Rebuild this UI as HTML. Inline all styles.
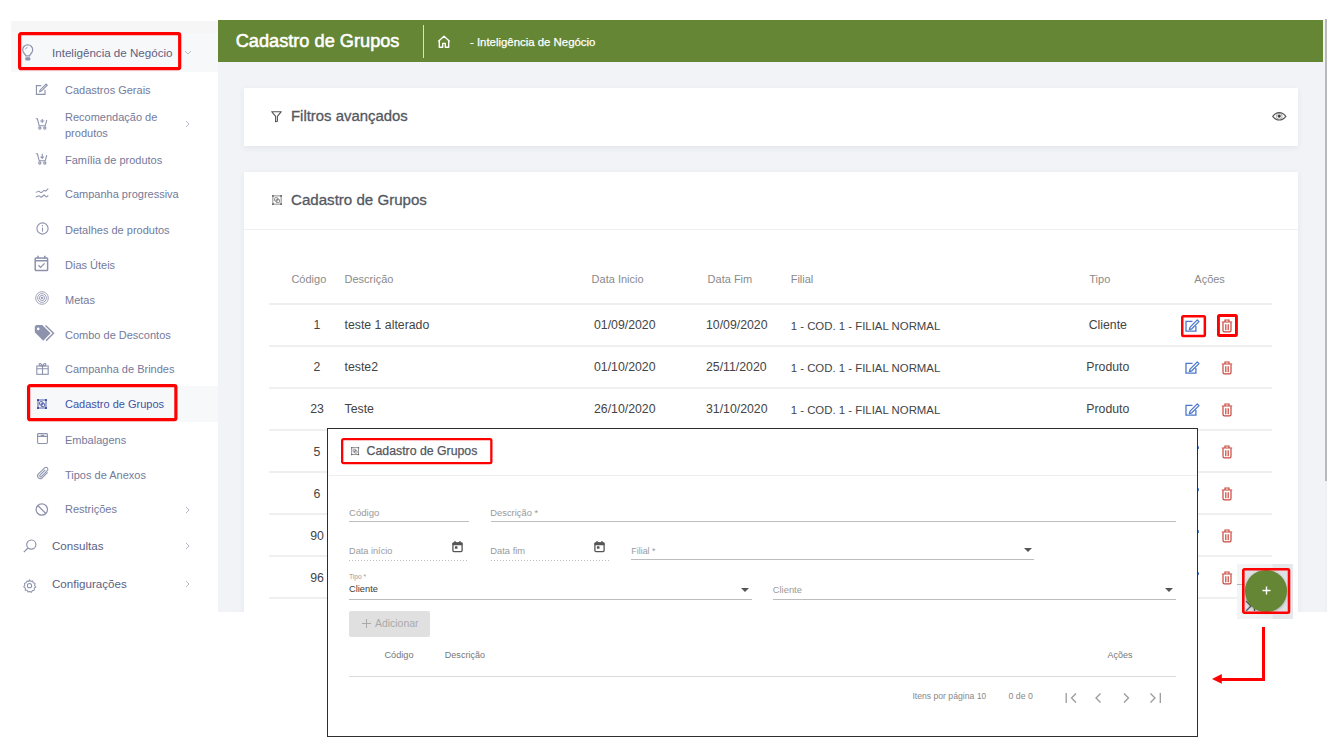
<!DOCTYPE html>
<html><head><meta charset="utf-8"><style>
html,body{margin:0;padding:0;background:#fff;}
body{width:1337px;height:753px;overflow:hidden;position:relative;font-family:"Liberation Sans", sans-serif;}
.t{position:absolute;white-space:nowrap;}
.r{position:absolute;}
svg{position:absolute;overflow:visible;}
</style></head><body>
<div class="r" style="left:11px;top:21px;width:207px;height:11.5px;background:#f6f6f7;"></div>
<div class="r" style="left:11px;top:32.5px;width:207px;height:39px;background:#f7f8fa;"></div>
<div class="r" style="left:25px;top:385.5px;width:193px;height:36.3px;background:#f7f8fa;"></div>
<div class="r" style="left:218px;top:20px;width:1107px;height:592.7px;background:#f1f3f7;"></div>
<div class="r" style="left:218px;top:20px;width:1105px;height:42px;background:#658634;"></div>
<div class="r" style="left:423px;top:25px;width:1px;height:33px;background:rgba(255,255,255,0.75);"></div>
<div class="r" style="left:1325px;top:19px;width:2px;height:462px;background:#b9b9b9;"></div>
<div class="r" style="left:1325px;top:481px;width:2px;height:131px;background:#f0f0f0;"></div>
<div class="r" style="left:244px;top:88px;width:1054px;height:58px;background:#fff;box-shadow:0 2px 6px rgba(40,50,80,0.07);"></div>
<div class="r" style="left:244px;top:172px;width:1054px;height:440px;background:#fff;box-shadow:0 2px 6px rgba(40,50,80,0.07);"></div>
<div class="r" style="left:244px;top:229px;width:1054px;height:1px;background:#eef0f3;"></div>
<div class="r" style="left:269px;top:303px;width:1003px;height:2px;background:#efefef;"></div>
<div class="r" style="left:269px;top:345px;width:1003px;height:2px;background:#efefef;"></div>
<div class="r" style="left:269px;top:387px;width:1003px;height:2px;background:#efefef;"></div>
<div class="r" style="left:269px;top:429px;width:1003px;height:2px;background:#efefef;"></div>
<div class="r" style="left:269px;top:471px;width:1003px;height:2px;background:#efefef;"></div>
<div class="r" style="left:269px;top:513px;width:1003px;height:2px;background:#efefef;"></div>
<div class="r" style="left:269px;top:555px;width:1003px;height:2px;background:#efefef;"></div>
<div class="r" style="left:269px;top:597px;width:1003px;height:2px;background:#efefef;"></div>
<div class="t" style="left:52px;top:45.53px;font-size:11.6px;line-height:14.5px;color:#5c6183;font-weight:normal;">Inteligência de Negócio</div>
<div class="t" style="left:65px;top:83.71px;font-size:11px;line-height:13.75px;color:#737a9b;font-weight:normal;">Cadastros Gerais</div>
<div class="t" style="left:65px;top:110.81px;font-size:11px;line-height:13.75px;color:#737a9b;font-weight:normal;">Recomendação de</div>
<div class="t" style="left:65px;top:126.91px;font-size:11px;line-height:13.75px;color:#737a9b;font-weight:normal;">produtos</div>
<div class="t" style="left:65px;top:153.71px;font-size:11px;line-height:13.75px;color:#737a9b;font-weight:normal;">Família de produtos</div>
<div class="t" style="left:65px;top:188.31px;font-size:11px;line-height:13.75px;color:#737a9b;font-weight:normal;">Campanha progressiva</div>
<div class="t" style="left:65px;top:223.71px;font-size:11px;line-height:13.75px;color:#737a9b;font-weight:normal;">Detalhes de produtos</div>
<div class="t" style="left:65px;top:258.91px;font-size:11px;line-height:13.75px;color:#737a9b;font-weight:normal;">Dias Úteis</div>
<div class="t" style="left:65px;top:293.51px;font-size:11px;line-height:13.75px;color:#737a9b;font-weight:normal;">Metas</div>
<div class="t" style="left:65px;top:328.51px;font-size:11px;line-height:13.75px;color:#737a9b;font-weight:normal;">Combo de Descontos</div>
<div class="t" style="left:65px;top:363.31px;font-size:11px;line-height:13.75px;color:#737a9b;font-weight:normal;">Campanha de Brindes</div>
<div class="t" style="left:65px;top:398.11px;font-size:11px;line-height:13.75px;color:#4152a6;font-weight:normal;">Cadastro de Grupos</div>
<div class="t" style="left:65px;top:433.51px;font-size:11px;line-height:13.75px;color:#737a9b;font-weight:normal;">Embalagens</div>
<div class="t" style="left:65px;top:468.51px;font-size:11px;line-height:13.75px;color:#737a9b;font-weight:normal;">Tipos de Anexos</div>
<div class="t" style="left:65px;top:503.01px;font-size:11px;line-height:13.75px;color:#737a9b;font-weight:normal;">Restrições</div>
<div class="t" style="left:52px;top:538.93px;font-size:11.6px;line-height:14.5px;color:#5c6183;font-weight:normal;">Consultas</div>
<div class="t" style="left:52px;top:576.93px;font-size:11.6px;line-height:14.5px;color:#5c6183;font-weight:normal;">Configurações</div>
<div class="t" style="left:235.7px;top:29.72px;font-size:18.2px;line-height:22.75px;color:#fff;font-weight:normal;-webkit-text-stroke:0.55px #fff;">Cadastro de Grupos</div>
<div class="t" style="left:470px;top:34.92px;font-size:11.4px;line-height:14.25px;color:#fff;font-weight:normal;-webkit-text-stroke:0.25px #fff;">- Inteligência de Negócio</div>
<div class="t" style="left:291px;top:106.72px;font-size:14.9px;line-height:18.62px;color:#54585f;font-weight:normal;-webkit-text-stroke:0.3px #54585f;">Filtros avançados</div>
<div class="t" style="left:291px;top:190.62px;font-size:15.1px;line-height:18.88px;color:#54585f;font-weight:normal;-webkit-text-stroke:0.3px #54585f;">Cadastro de Grupos</div>
<div class="t" style="left:291.4px;top:272.51px;font-size:11px;line-height:13.75px;color:#8a8a8a;font-weight:normal;">Código</div>
<div class="t" style="left:344.5px;top:272.51px;font-size:11px;line-height:13.75px;color:#8a8a8a;font-weight:normal;">Descrição</div>
<div class="t" style="left:591.6px;top:272.51px;font-size:11px;line-height:13.75px;color:#8a8a8a;font-weight:normal;">Data Inicio</div>
<div class="t" style="left:707.6px;top:272.51px;font-size:11px;line-height:13.75px;color:#8a8a8a;font-weight:normal;">Data Fim</div>
<div class="t" style="left:790.7px;top:272.51px;font-size:11px;line-height:13.75px;color:#8a8a8a;font-weight:normal;">Filial</div>
<div class="t" style="left:1089.3px;top:272.51px;font-size:11px;line-height:13.75px;color:#8a8a8a;font-weight:normal;">Tipo</div>
<div class="t" style="left:1194.3px;top:272.51px;font-size:11px;line-height:13.75px;color:#8a8a8a;font-weight:normal;">Ações</div>
<div class="t" style="left:217px;width:200px;text-align:center;top:318.25px;font-size:12.3px;line-height:15.38px;color:#444;font-weight:normal;">1</div>
<div class="t" style="left:344.5px;top:318.25px;font-size:12.3px;line-height:15.38px;color:#444;font-weight:normal;">teste 1 alterado</div>
<div class="t" style="left:594px;top:318.25px;font-size:12.3px;line-height:15.38px;color:#444;font-weight:normal;">01/09/2020</div>
<div class="t" style="left:706px;top:318.25px;font-size:12.3px;line-height:15.38px;color:#444;font-weight:normal;">10/09/2020</div>
<div class="t" style="left:790.7px;top:319.12px;font-size:11.4px;line-height:14.25px;color:#444;font-weight:normal;">1 - COD. 1 - FILIAL NORMAL</div>
<div class="t" style="left:1007.8px;width:200px;text-align:center;top:318.25px;font-size:12.3px;line-height:15.38px;color:#444;font-weight:normal;">Cliente</div>
<div class="t" style="left:217px;width:200px;text-align:center;top:360.25px;font-size:12.3px;line-height:15.38px;color:#444;font-weight:normal;">2</div>
<div class="t" style="left:344.5px;top:360.25px;font-size:12.3px;line-height:15.38px;color:#444;font-weight:normal;">teste2</div>
<div class="t" style="left:594px;top:360.25px;font-size:12.3px;line-height:15.38px;color:#444;font-weight:normal;">01/10/2020</div>
<div class="t" style="left:706px;top:360.25px;font-size:12.3px;line-height:15.38px;color:#444;font-weight:normal;">25/11/2020</div>
<div class="t" style="left:790.7px;top:361.12px;font-size:11.4px;line-height:14.25px;color:#444;font-weight:normal;">1 - COD. 1 - FILIAL NORMAL</div>
<div class="t" style="left:1007.8px;width:200px;text-align:center;top:360.25px;font-size:12.3px;line-height:15.38px;color:#444;font-weight:normal;">Produto</div>
<div class="t" style="left:217px;width:200px;text-align:center;top:402.25px;font-size:12.3px;line-height:15.38px;color:#444;font-weight:normal;">23</div>
<div class="t" style="left:344.5px;top:402.25px;font-size:12.3px;line-height:15.38px;color:#444;font-weight:normal;">Teste</div>
<div class="t" style="left:594px;top:402.25px;font-size:12.3px;line-height:15.38px;color:#444;font-weight:normal;">26/10/2020</div>
<div class="t" style="left:706px;top:402.25px;font-size:12.3px;line-height:15.38px;color:#444;font-weight:normal;">31/10/2020</div>
<div class="t" style="left:790.7px;top:403.12px;font-size:11.4px;line-height:14.25px;color:#444;font-weight:normal;">1 - COD. 1 - FILIAL NORMAL</div>
<div class="t" style="left:1007.8px;width:200px;text-align:center;top:402.25px;font-size:12.3px;line-height:15.38px;color:#444;font-weight:normal;">Produto</div>
<div class="t" style="left:217px;width:200px;text-align:center;top:445.05px;font-size:12.3px;line-height:15.38px;color:#444;font-weight:normal;">5</div>
<div class="t" style="left:217px;width:200px;text-align:center;top:487.05px;font-size:12.3px;line-height:15.38px;color:#444;font-weight:normal;">6</div>
<div class="t" style="left:217px;width:200px;text-align:center;top:529.05px;font-size:12.3px;line-height:15.38px;color:#444;font-weight:normal;">90</div>
<div class="t" style="left:217px;width:200px;text-align:center;top:571.05px;font-size:12.3px;line-height:15.38px;color:#444;font-weight:normal;">96</div>
<svg style="left:21.5px;top:43.5px;" width="12" height="17" viewBox="0 0 12 17"><g fill="none" stroke="#8d92ad" stroke-width="1.15"><path d="M5.7 0.7a5.1 5.1 0 0 0-5 5.1c0 1.6.7 2.7 1.6 3.7.8.9 1.3 1.5 1.5 2.3h3.8c.2-.8.7-1.4 1.5-2.3.9-1 1.6-2.1 1.6-3.7a5.1 5.1 0 0 0-5-5.1z"/><path d="M3.6 5.3a2.4 2.4 0 0 1 1.9-2" stroke-width="0.8"/></g><rect x="3.3" y="13.3" width="5" height="3.2" rx="1" fill="#8d92ad"/></svg>
<svg style="left:35.3px;top:82.6px;" width="12.5" height="12.5" viewBox="0 0 14 14"><g fill="none" stroke="#8d92ad" stroke-width="1.25"><path d="M7 3H1.6v9.8h9.6V7.5"/><path d="M12.4 1.2l1.3 1.3-6.6 6.6-1.9.6.6-1.9z"/></g></svg>
<svg style="left:35px;top:118px;" width="14" height="12" viewBox="0 0 14 12"><g fill="none" stroke="#8d92ad" stroke-width="1.1"><path d="M0.8 0.8h1.6l1.8 7h6l1.6-5.6"/><path d="M7.2 1v4M5.2 3h4"/><circle cx="4.8" cy="10" r="1.1"/><circle cx="9.8" cy="10" r="1.1"/></g></svg>
<svg style="left:35px;top:153px;" width="14" height="12" viewBox="0 0 14 12"><g fill="none" stroke="#8d92ad" stroke-width="1.1"><path d="M0.8 0.8h1.6l1.8 7h6l1.6-5.6"/><path d="M7.2 0.8v4.4M5.6 3.6l1.6 1.6 1.6-1.6"/><circle cx="4.8" cy="10" r="1.1"/><circle cx="9.8" cy="10" r="1.1"/></g></svg>
<svg style="left:35px;top:188px;" width="14" height="11" viewBox="0 0 14 11"><g fill="none" stroke="#8d92ad" stroke-width="1.1"><path d="M0.8 4.2c1.5 0 2-1 3-1s1.3 1.3 2.5 1.3 1.6-2 2.7-2 1.3 1 2.3 0 1.2-1.6 2-1.6"/><path d="M0.8 8.8c1.5 0 2-1 3-1s1.3 1.3 2.5 1.3 1.6-2 2.7-2 1.3 1.8 2.3 1.8 1-1.3 2-1.3"/></g></svg>
<svg style="left:35.5px;top:222px;" width="13" height="13" viewBox="0 0 13 13"><g fill="none" stroke="#8d92ad" stroke-width="1.1"><circle cx="6.5" cy="6.5" r="5.6"/><path d="M6.5 5.6v4"/></g><circle cx="6.5" cy="3.8" r="0.7" fill="#8d92ad"/></svg>
<svg style="left:34px;top:255px;" width="15" height="17" viewBox="0 0 15 17"><g fill="none" stroke="#8d92ad" stroke-width="1.5"><rect x="1.2" y="3" width="12.4" height="12.6" rx="0.8"/><path d="M4 0.8v3M10.8 0.8v3M1.2 5.8h12.4" /><path d="M4.4 10.2l2.2 2.2 4-4" stroke-width="1.3"/></g></svg>
<svg style="left:35px;top:291px;" width="14" height="14" viewBox="0 0 14 14"><g fill="none" stroke="#8d92ad" stroke-width="0.9" opacity="0.9"><circle cx="7" cy="7" r="6.3"/><circle cx="7" cy="7" r="4.4"/><circle cx="7" cy="7" r="2.6"/><circle cx="7" cy="7" r="0.9" fill="#8d92ad"/></g></svg>
<svg style="left:34px;top:325px;" width="21" height="17" viewBox="0 0 21 17"><path d="M0.8 1.5v5.8l8.4 8.4 7.4-7.4L8.2 0H2.3z" fill="#8d92ad"/><circle cx="4.2" cy="3.9" r="1.3" fill="#fff"/><path d="M11.5 0.6l8 7.7-7.4 7.4" fill="none" stroke="#8d92ad" stroke-width="1.4"/></svg>
<svg style="left:36px;top:362px;" width="13" height="13" viewBox="0 0 13 13"><g fill="none" stroke="#8d92ad" stroke-width="1.1"><rect x="0.8" y="4" width="11.4" height="8.3"/><path d="M0.8 6.8h11.4M6.5 4v8.3"/><path d="M6.5 4C5 1 3 1 3.2 2.6S5 4 6.5 4C8 1 10 1 9.8 2.6S8 4 6.5 4"/></g></svg>
<svg style="left:37px;top:398.5px;" width="10" height="10" viewBox="0 0 10 10"><g fill="none" stroke="#3f4fa0" stroke-width="0.9"><rect x="1.0" y="1.0" width="8.0" height="8.0"/><rect x="2.6" y="2.7" width="3.3" height="3.3" rx="0.8"/><rect x="4.2" y="4.3" width="3.3" height="3.3" rx="0.8"/></g><g fill="#3f4fa0"><rect x="0" y="0" width="2.0" height="2.0" rx="0.5"/><rect x="8.0" y="0" width="2.0" height="2.0" rx="0.5"/><rect x="0" y="8.0" width="2.0" height="2.0" rx="0.5"/><rect x="8.0" y="8.0" width="2.0" height="2.0" rx="0.5"/></g></svg>
<svg style="left:36.5px;top:432.8px;" width="11" height="11" viewBox="0 0 11 11"><g fill="none" stroke="#8d92ad" stroke-width="1.1"><rect x="0.6" y="0.6" width="9.8" height="9.9" rx="0.9"/><path d="M0.6 3.4h9.8M3.8 2.2h3.4"/></g></svg>
<svg style="left:36.5px;top:467px;" width="12" height="13" viewBox="0 0 12 13"><path d="M10.6 5.4L5 11a2.7 2.7 0 0 1-3.8-3.8L7.6 0.9a1.9 1.9 0 0 1 2.7 2.7L4.3 9.6a1 1 0 0 1-1.4-1.4l5.4-5.4" fill="none" stroke="#8d92ad" stroke-width="1.05"/></svg>
<svg style="left:35px;top:502.5px;" width="14" height="14" viewBox="0 0 14 14"><g fill="none" stroke="#8d92ad" stroke-width="1.25"><circle cx="6.8" cy="6.5" r="5.7"/><path d="M2.8 2.5l8 8"/></g></svg>
<svg style="left:22.5px;top:539px;" width="14" height="14" viewBox="0 0 14 14"><g fill="none" stroke="#8d92ad" stroke-width="1.2"><circle cx="8.3" cy="5.6" r="4.6"/><path d="M5 9l-4.2 4.2"/></g></svg>
<svg style="left:23px;top:578.5px;" width="13" height="13" viewBox="0 0 14 14"><g fill="none" stroke="#8d92ad" stroke-width="1.1"><path d="M7 0.8l1.3 1.7 2.1-.4.6 2 2 .8-.6 2.1 1.4 1.6-1.7 1.3.1 2.1-2.1.3-.9 1.9-2-.8L5.5 14l-1-1.9-2.1-.1.2-2.1L0.8 8.5 2 6.8 1.5 4.7l2-.6.9-1.9 2 .6z" stroke-linejoin="round"/><circle cx="7" cy="7.2" r="2.3"/></g></svg>
<svg style="left:185.4px;top:120px;" width="5" height="8" viewBox="0 0 5 8"><path d="M1 1l3 3-3 3" fill="none" stroke="#b4b8c8" stroke-width="1"/></svg>
<svg style="left:185.4px;top:505.5px;" width="5" height="8" viewBox="0 0 5 8"><path d="M1 1l3 3-3 3" fill="none" stroke="#b4b8c8" stroke-width="1"/></svg>
<svg style="left:185.4px;top:542px;" width="5" height="8" viewBox="0 0 5 8"><path d="M1 1l3 3-3 3" fill="none" stroke="#b4b8c8" stroke-width="1"/></svg>
<svg style="left:185.4px;top:580px;" width="5" height="8" viewBox="0 0 5 8"><path d="M1 1l3 3-3 3" fill="none" stroke="#b4b8c8" stroke-width="1"/></svg>
<svg style="left:183.6px;top:50.2px;" width="8" height="5" viewBox="0 0 8 5"><path d="M1 1l3 3 3-3" fill="none" stroke="#b4b8c8" stroke-width="1"/></svg>
<svg style="left:437px;top:34.5px;" width="14" height="13" viewBox="0 0 14 13"><path d="M1.2 6.6L7 1.2l5.8 5.4M2.3 5.8v6.4h3.4V8.4h2.6v3.8h3.4V5.8" fill="none" stroke="#fff" stroke-width="1.4" stroke-linejoin="round"/></svg>
<svg style="left:271px;top:110.5px;" width="11" height="11" viewBox="0 0 11 11"><path d="M0.7 0.7h9.6L6.4 5.4v4.8l-1.8 0.6V5.4z" fill="none" stroke="#555" stroke-width="1.1" stroke-linejoin="round"/></svg>
<svg style="left:271.5px;top:195.2px;" width="10" height="10" viewBox="0 0 10 10"><g fill="none" stroke="#666" stroke-width="0.75"><rect x="0.9" y="0.9" width="8.2" height="8.2"/><rect x="2.6" y="2.7" width="3.3" height="3.3" rx="0.8"/><rect x="4.2" y="4.3" width="3.3" height="3.3" rx="0.8"/></g><g fill="#666"><rect x="0" y="0" width="1.8" height="1.8" rx="0.5"/><rect x="8.2" y="0" width="1.8" height="1.8" rx="0.5"/><rect x="0" y="8.2" width="1.8" height="1.8" rx="0.5"/><rect x="8.2" y="8.2" width="1.8" height="1.8" rx="0.5"/></g></svg>
<svg style="left:1272px;top:111.8px;" width="15" height="9" viewBox="0 0 15 9"><path d="M0.7 4.3C3 1.4 5 0.6 7.2 0.6S11.6 1.4 13.9 4.3C11.6 7.2 9.6 8 7.2 8S3 7.2 0.7 4.3z" fill="none" stroke="#555" stroke-width="1.1"/><circle cx="7.2" cy="4.3" r="2.9" fill="none" stroke="#777" stroke-width="0.6"/><circle cx="7.2" cy="4.1" r="1.6" fill="#3a3d48"/></svg>
<svg style="left:1184.5px;top:318.5px;" width="15" height="13" viewBox="0 0 15 13"><g fill="none" stroke="#4d78cc" stroke-width="1.3"><path d="M7.5 2.3H1v9.9h9.9V7"/><path d="M12.3 0.9l1.7 1.7-7.2 7.2-2.5.8.8-2.5z" stroke-linejoin="round"/></g></svg>
<svg style="left:1184.5px;top:360.5px;" width="15" height="13" viewBox="0 0 15 13"><g fill="none" stroke="#4d78cc" stroke-width="1.3"><path d="M7.5 2.3H1v9.9h9.9V7"/><path d="M12.3 0.9l1.7 1.7-7.2 7.2-2.5.8.8-2.5z" stroke-linejoin="round"/></g></svg>
<svg style="left:1184.5px;top:402.5px;" width="15" height="13" viewBox="0 0 15 13"><g fill="none" stroke="#4d78cc" stroke-width="1.3"><path d="M7.5 2.3H1v9.9h9.9V7"/><path d="M12.3 0.9l1.7 1.7-7.2 7.2-2.5.8.8-2.5z" stroke-linejoin="round"/></g></svg>
<svg style="left:1221px;top:318.5px;" width="12" height="14" viewBox="0 0 12 14"><g fill="none" stroke="#c9473e" stroke-width="1.2"><path d="M0.8 3h10.4M4 3V1h4v2"/><path d="M2 3.2v8.4q0 1.3 1.3 1.3h5.4q1.3 0 1.3-1.3V3.2"/><path d="M4.8 5.2v6M7.2 5.2v6"/></g></svg>
<svg style="left:1221px;top:360.5px;" width="12" height="14" viewBox="0 0 12 14"><g fill="none" stroke="#c9473e" stroke-width="1.2"><path d="M0.8 3h10.4M4 3V1h4v2"/><path d="M2 3.2v8.4q0 1.3 1.3 1.3h5.4q1.3 0 1.3-1.3V3.2"/><path d="M4.8 5.2v6M7.2 5.2v6"/></g></svg>
<svg style="left:1221px;top:402.5px;" width="12" height="14" viewBox="0 0 12 14"><g fill="none" stroke="#c9473e" stroke-width="1.2"><path d="M0.8 3h10.4M4 3V1h4v2"/><path d="M2 3.2v8.4q0 1.3 1.3 1.3h5.4q1.3 0 1.3-1.3V3.2"/><path d="M4.8 5.2v6M7.2 5.2v6"/></g></svg>
<svg style="left:1221px;top:444.5px;" width="12" height="14" viewBox="0 0 12 14"><g fill="none" stroke="#c9473e" stroke-width="1.2"><path d="M0.8 3h10.4M4 3V1h4v2"/><path d="M2 3.2v8.4q0 1.3 1.3 1.3h5.4q1.3 0 1.3-1.3V3.2"/><path d="M4.8 5.2v6M7.2 5.2v6"/></g></svg>
<svg style="left:1221px;top:486.5px;" width="12" height="14" viewBox="0 0 12 14"><g fill="none" stroke="#c9473e" stroke-width="1.2"><path d="M0.8 3h10.4M4 3V1h4v2"/><path d="M2 3.2v8.4q0 1.3 1.3 1.3h5.4q1.3 0 1.3-1.3V3.2"/><path d="M4.8 5.2v6M7.2 5.2v6"/></g></svg>
<svg style="left:1221px;top:528.5px;" width="12" height="14" viewBox="0 0 12 14"><g fill="none" stroke="#c9473e" stroke-width="1.2"><path d="M0.8 3h10.4M4 3V1h4v2"/><path d="M2 3.2v8.4q0 1.3 1.3 1.3h5.4q1.3 0 1.3-1.3V3.2"/><path d="M4.8 5.2v6M7.2 5.2v6"/></g></svg>
<svg style="left:1221px;top:570.5px;" width="12" height="14" viewBox="0 0 12 14"><g fill="none" stroke="#c9473e" stroke-width="1.2"><path d="M0.8 3h10.4M4 3V1h4v2"/><path d="M2 3.2v8.4q0 1.3 1.3 1.3h5.4q1.3 0 1.3-1.3V3.2"/><path d="M4.8 5.2v6M7.2 5.2v6"/></g></svg>
<div class="r" style="left:1197.5px;top:446px;width:1.5px;height:3px;background:#4d78cc;border-radius:2.5px;"></div>
<div class="r" style="left:1197.5px;top:488px;width:1.5px;height:3px;background:#4d78cc;border-radius:2.5px;"></div>
<div class="r" style="left:1197.5px;top:530px;width:1.5px;height:3px;background:#4d78cc;border-radius:2.5px;"></div>
<div class="r" style="left:1197.5px;top:572px;width:1.5px;height:3px;background:#4d78cc;border-radius:2.5px;"></div>
<div class="r" style="left:0px;top:612px;width:1337px;height:141px;background:#fff;"></div>
<div class="r" style="left:327px;top:427.5px;width:871px;height:309px;background:#fff;border:1px solid #2e2e2e;box-sizing:border-box;"></div>
<div class="r" style="left:329px;top:475px;width:868px;height:1px;background:#eceef2;"></div>
<svg style="left:350.8px;top:446.8px;" width="8.2" height="8.2" viewBox="0 0 10 10"><g fill="none" stroke="#666" stroke-width="0.8"><rect x="0.9" y="0.9" width="8.2" height="8.2"/><rect x="2.6" y="2.7" width="3.3" height="3.3" rx="0.8"/><rect x="4.2" y="4.3" width="3.3" height="3.3" rx="0.8"/></g><g fill="#666"><rect x="0" y="0" width="1.8" height="1.8" rx="0.5"/><rect x="8.2" y="0" width="1.8" height="1.8" rx="0.5"/><rect x="0" y="8.2" width="1.8" height="1.8" rx="0.5"/><rect x="8.2" y="8.2" width="1.8" height="1.8" rx="0.5"/></g></svg>
<div class="t" style="left:366.6px;top:444.05px;font-size:12.3px;line-height:15.38px;color:#54585f;font-weight:normal;-webkit-text-stroke:0.25px #54585f;">Cadastro de Grupos</div>
<div class="t" style="left:349px;top:507.37px;font-size:9.6px;line-height:12.0px;color:#9a9a9a;font-weight:normal;">Código</div>
<div class="r" style="left:349px;top:520.5px;width:120px;height:1px;background:#bdbdbd;"></div>
<div class="t" style="left:490.3px;top:507.61px;font-size:9.35px;line-height:11.69px;color:#9a9a9a;font-weight:normal;">Descrição *</div>
<div class="r" style="left:490.5px;top:520.5px;width:685px;height:1px;background:#bdbdbd;"></div>
<div class="t" style="left:349px;top:546.06px;font-size:9.2px;line-height:11.5px;color:#9a9a9a;font-weight:normal;">Data início</div>
<div class="r" style="left:349px;top:559.5px;width:120px;height:1px;background-image:linear-gradient(90deg,#bdbdbd 50%,transparent 50%);background-size:3px 1px;"></div>
<div class="t" style="left:490.3px;top:545.91px;font-size:9.35px;line-height:11.69px;color:#9a9a9a;font-weight:normal;">Data fim</div>
<div class="r" style="left:490.5px;top:559.5px;width:120px;height:1px;background-image:linear-gradient(90deg,#bdbdbd 50%,transparent 50%);background-size:3px 1px;"></div>
<svg style="left:452px;top:541px;" width="11" height="11" viewBox="0 0 11 11"><g fill="#555"><rect x="0.9" y="2" width="9.2" height="8.6" rx="1.1" fill="none" stroke="#555" stroke-width="1.3"/><rect x="0.5" y="1.6" width="10" height="2.6" rx="0.8"/><rect x="2.4" y="0" width="1.3" height="2.2" rx="0.5"/><rect x="7.3" y="0" width="1.3" height="2.2" rx="0.5"/><rect x="2.9" y="5.2" width="2.6" height="2.5" rx="0.5"/></g></svg>
<svg style="left:593.5px;top:541px;" width="11" height="11" viewBox="0 0 11 11"><g fill="#555"><rect x="0.9" y="2" width="9.2" height="8.6" rx="1.1" fill="none" stroke="#555" stroke-width="1.3"/><rect x="0.5" y="1.6" width="10" height="2.6" rx="0.8"/><rect x="2.4" y="0" width="1.3" height="2.2" rx="0.5"/><rect x="7.3" y="0" width="1.3" height="2.2" rx="0.5"/><rect x="2.9" y="5.2" width="2.6" height="2.5" rx="0.5"/></g></svg>
<div class="t" style="left:631.3px;top:546.15px;font-size:8.9px;line-height:11.12px;color:#9a9a9a;font-weight:normal;">Filial *</div>
<div class="r" style="left:631.3px;top:558.5px;width:403px;height:1px;background:#bdbdbd;"></div>
<svg style="left:1024px;top:548px;" width="8" height="4" viewBox="0 0 8 4"><path d="M0 0h8L4 4z" fill="#555"/></svg>
<div class="t" style="left:349px;top:572.59px;font-size:6.7px;line-height:8.38px;color:#9a9a9a;font-weight:normal;">Tipo *</div>
<div class="t" style="left:349px;top:584.17px;font-size:9.3px;line-height:11.62px;color:#3c3c3c;font-weight:normal;">Cliente</div>
<div class="r" style="left:349px;top:598.5px;width:402.5px;height:1px;background:#bdbdbd;"></div>
<svg style="left:741px;top:588px;" width="8" height="4" viewBox="0 0 8 4"><path d="M0 0h8L4 4z" fill="#555"/></svg>
<div class="t" style="left:772.8px;top:584.91px;font-size:9.35px;line-height:11.69px;color:#9a9a9a;font-weight:normal;">Cliente</div>
<div class="r" style="left:772.8px;top:598.5px;width:403px;height:1px;background:#bdbdbd;"></div>
<svg style="left:1164.5px;top:588px;" width="8" height="4" viewBox="0 0 8 4"><path d="M0 0h8L4 4z" fill="#555"/></svg>
<div class="r" style="left:349px;top:611px;width:81px;height:25.5px;background:#e0e0e0;border-radius:2px;"></div>
<div class="t" style="left:375px;top:617.05px;font-size:10.45px;line-height:13.06px;color:#a9a9a9;font-weight:normal;">Adicionar</div>
<svg style="left:362px;top:618.5px;" width="9" height="9" viewBox="0 0 9 9"><path d="M4.5 0v9M0 4.5h9" stroke="#a9a9a9" stroke-width="1"/></svg>
<div class="t" style="left:384.4px;top:650.06px;font-size:9.2px;line-height:11.5px;color:#777;font-weight:normal;">Código</div>
<div class="t" style="left:444.8px;top:650.21px;font-size:9.05px;line-height:11.31px;color:#777;font-weight:normal;">Descrição</div>
<div class="t" style="left:1107.4px;top:650.25px;font-size:9.0px;line-height:11.25px;color:#777;font-weight:normal;">Ações</div>
<div class="r" style="left:349px;top:676px;width:827px;height:1px;background:#dadada;"></div>
<div class="t" style="left:912.4px;top:690.90px;font-size:8.65px;line-height:10.81px;color:#888;font-weight:normal;">Itens por página</div>
<div class="t" style="left:977px;top:691.23px;font-size:8.3px;line-height:10.38px;color:#888;font-weight:normal;">10</div>
<div class="t" style="left:1008.5px;top:690.75px;font-size:8.8px;line-height:11.0px;color:#888;font-weight:normal;">0 de 0</div>
<svg style="left:1064.5px;top:691.5px;" width="13" height="12" viewBox="0 0 13 12"><g fill="none" stroke="#9a9a9a" stroke-width="1.3"><path d="M1.2 1v10"/><path d="M11 1.5L6.5 6l4.5 4.5"/></g></svg>
<svg style="left:1094.5px;top:691.5px;" width="7" height="12" viewBox="0 0 7 12"><path d="M5.5 1.5L1 6l4.5 4.5" fill="none" stroke="#9a9a9a" stroke-width="1.3"/></svg>
<svg style="left:1123px;top:691.5px;" width="7" height="12" viewBox="0 0 7 12"><path d="M1 1.5L5.5 6 1 10.5" fill="none" stroke="#9a9a9a" stroke-width="1.3"/></svg>
<svg style="left:1148.5px;top:691.5px;" width="13" height="12" viewBox="0 0 13 12"><g fill="none" stroke="#9a9a9a" stroke-width="1.3"><path d="M1.5 1.5L6 6l-4.5 4.5"/><path d="M11.3 1v10"/></g></svg>
<svg style="left:17.7px;top:32px;" width="163.3" height="38.3" viewBox="0 0 163.3 38.3"><rect x="1.6" y="1.6" width="160.10000000000002" height="35.099999999999994" rx="1.4" fill="none" stroke="#ff0000" stroke-width="3.2"/></svg>
<svg style="left:26.6px;top:383.6px;" width="150.5" height="37.299999999999955" viewBox="0 0 150.5 37.299999999999955"><rect x="1.6" y="1.6" width="147.3" height="34.09999999999995" rx="1.4" fill="none" stroke="#ff0000" stroke-width="3.2"/></svg>
<svg style="left:1180.5px;top:314.5px;" width="25.09999999999991" height="22.30000000000001" viewBox="0 0 25.09999999999991 22.30000000000001"><rect x="1.25" y="1.25" width="22.59999999999991" height="19.80000000000001" rx="1.25" fill="none" stroke="#ff0000" stroke-width="2.5"/></svg>
<svg style="left:1216.9px;top:313.8px;" width="20.899999999999864" height="23.0" viewBox="0 0 20.899999999999864 23.0"><rect x="1.45" y="1.45" width="17.999999999999865" height="20.1" rx="1.05" fill="none" stroke="#ff0000" stroke-width="2.9"/></svg>
<svg style="left:340.7px;top:437.9px;" width="151.5" height="26.30000000000001" viewBox="0 0 151.5 26.30000000000001"><rect x="1.15" y="1.15" width="149.2" height="24.00000000000001" rx="1.35" fill="none" stroke="#ff0000" stroke-width="2.3"/></svg>
<div class="r" style="left:1237px;top:564px;width:56px;height:55px;background:linear-gradient(90deg,#f3f4f6 0%,#eef0f3 63%,#e3e5ea 64%,#e6e8ec 100%);"></div>
<div class="r" style="left:1244px;top:570px;width:43px;height:42px;background:#dfe0e4;"></div>
<div class="r" style="left:1237px;top:584px;width:8px;height:1px;background:#b5b5b5;"></div>
<svg style="left:1245px;top:600px;" width="12" height="12" viewBox="0 0 12 12"><path d="M1 1l5 5-5 5M9.5 1v10" fill="none" stroke="#5a5a5a" stroke-width="1.4"/></svg>
<div class="r" style="left:1244.5px;top:569.8px;width:42.5px;height:42px;background:#658634;border-radius:50%;box-shadow:0 1px 3px rgba(0,0,0,0.25);"></div>
<svg style="left:1261.5px;top:586px;" width="9" height="9" viewBox="0 0 9 9"><path d="M4.5 0.5v8M0.5 4.5h8" stroke="#fff" stroke-width="1.4"/></svg>
<svg style="left:1241.5px;top:567.8px;" width="48.299999999999955" height="46.0" viewBox="0 0 48.299999999999955 46.0"><rect x="1.3" y="1.3" width="45.69999999999995" height="43.4" rx="1.2" fill="none" stroke="#ff0000" stroke-width="2.6"/></svg>
<div class="r" style="left:1262px;top:627.2px;width:3px;height:53.7px;background:#ff0000;"></div>
<div class="r" style="left:1220px;top:677.9px;width:45px;height:3px;background:#ff0000;"></div>
<svg style="left:1212px;top:674.4px;" width="9.8" height="9.8" viewBox="0 0 9.8 9.8"><path d="M0 4.9L9.8 0v9.8z" fill="#ff0000"/></svg>
</body></html>
